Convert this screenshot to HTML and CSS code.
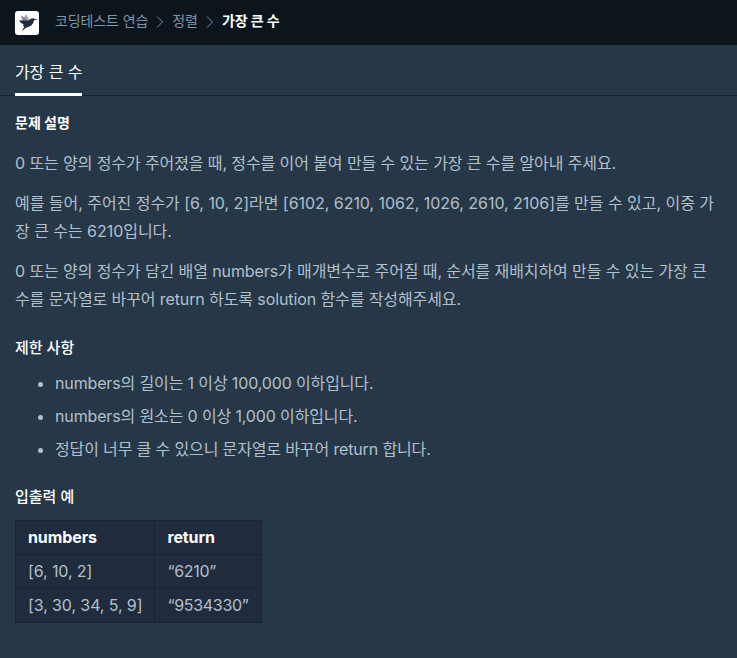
FILE: index.html
```html
<!DOCTYPE html>
<html lang="ko">
<head>
    <meta charset="UTF-8">
    <meta name="viewport" content="width=device-width, initial-scale=1.0">
    <title>코딩테스트 연습 - 가장 큰 수</title>
    <link rel="stylesheet" href="styles.css">
</head>
<body>

    <header class="navbar">
        <a class="logo" href="#">
            <svg width="24" height="24" viewBox="0 0 24 24">
                <rect width="24" height="24" rx="3" fill="#fff"/>
                <path d="M6 4.500l3 2L11 3l3.500 6-2 3-5-2z" fill="#a5acb5"/>
                <path d="M6 4.500l4.500 3 3 2.500-5 .5z" fill="#7c8592"/>
                <path d="M4 9.300l9 .5 3-2q1.500-1.200 3 0l4 .4-4 1q-.6 4-4 6l-4.500 1.700L7 20.500l2.200-5-1.700-1.500 1.500-.5Q5.500 12.500 4 9.300z" fill="#202b3d"/>
            </svg>
        </a>
        <ol class="breadcrumb">
            <li><a href="#">코딩테스트 연습</a></li>
            <li><svg class="arrow" width="8" height="14" viewBox="0 0 8 14"><path d="M1 1.500l5.500 5.500L1 12.500"/></svg></li>
            <li><a href="#">정렬</a></li>
            <li><svg class="arrow" width="8" height="14" viewBox="0 0 8 14"><path d="M1 1.500l5.500 5.500L1 12.500"/></svg></li>
            <li class="active">가장 큰 수</li>
        </ol>
    </header>

    <nav class="tabs">
        <a class="tab" href="#">가장 큰 수</a>
    </nav>

    <main class="guide">
        <h6 class="guide-title">문제 설명</h6>
        <p>0 또는 양의 정수가 주어졌을 때, 정수를 이어 붙여 만들 수 있는 가장 큰 수를 알아내 주세요.</p>
        <p class="example">예를 들어, 주어진 정수가 [6, 10, 2]라면 [6102, 6210, 1062, 1026, 2610, 2106]를 만들 수 있고, 이중 가장 큰 수는 6210입니다.</p>
        <p>0 또는 양의 정수가 담긴 배열 numbers가 매개변수로 주어질 때, 순서를 재배치하여 만들 수 있는 가장 큰 수를 문자열로 바꾸어 return 하도록 solution 함수를 작성해주세요.</p>

        <h5>제한 사항</h5>
        <ul>
            <li>numbers의 길이는 1 이상 100,000 이하입니다.</li>
            <li>numbers의 원소는 0 이상 1,000 이하입니다.</li>
            <li>정답이 너무 클 수 있으니 문자열로 바꾸어 return 합니다.</li>
        </ul>

        <h5>입출력 예</h5>
        <table>
            <thead>
                <tr><th>numbers</th><th>return</th></tr>
            </thead>
            <tbody>
                <tr><td>[6, 10, 2]</td><td>“6210”</td></tr>
                <tr><td>[3, 30, 34, 5, 9]</td><td>“9534330”</td></tr>
            </tbody>
        </table>
    </main>

</body>
</html>
```
FILE: styles.css
```css
* {
    box-sizing: border-box;
}

body {
    margin: 0;
    background-color: #263747;
    color: #b2c0cc;
    font-family: Inter, 'Noto Sans CJK KR', sans-serif;
    font-size: 16px;
    line-height: 28px;
    letter-spacing: -0.1px;
}

a {
    color: inherit;
    text-decoration: none;
}

.navbar {
    display: flex;
    align-items: center;
    height: 45px;
    padding: 0 15px;
    background-color: #0c151c;
}

.logo {
    display: flex;
    margin-right: 16px;
}

.breadcrumb {
    display: flex;
    align-items: center;
    gap: 8px;
    margin: 0;
    padding: 0 0 3px;
    list-style: none;
    font-size: 14px;
    line-height: 24px;
    color: #7e96a8;
}

.breadcrumb li {
    display: flex;
}

.breadcrumb .active {
    color: #fff;
    font-weight: 700;
}

.arrow {
    margin-top: 2px;
    fill: none;
    stroke: #78909c;
    stroke-width: 1;
}

.tabs {
    display: flex;
    height: 51px;
    padding: 0 15px;
    border-bottom: 1px solid #172334;
}

.tab {
    height: 51px;
    padding-top: 13px;
    border-bottom: 3px solid #fff;
    color: #fff;
}

.guide {
    padding: 15px 15px 0;
}

.guide-title {
    margin: 0 0 14px;
    color: #fff;
    font-size: 14px;
    font-weight: 700;
    line-height: 24px;
    letter-spacing: 0;
}

.guide p {
    margin: 0 0 12px;
    word-break: break-all;
}

.guide .example {
    letter-spacing: -0.04px;
}

.guide h5 {
    margin: 24px 0 11px;
    color: #fff;
    font-size: 15px;
    font-weight: 500;
    line-height: 21px;
    letter-spacing: 0;
}

.guide ul {
    margin: 0 0 23px;
    padding-left: 40px;
    letter-spacing: -0.14px;
}

.guide ul + h5 {
    margin: 0 0 13px;
}

.guide li + li {
    margin-top: 5px;
}

table {
    border-collapse: collapse;
    background-color: #202b3d;
    line-height: 24px;
}

th,
td {
    padding: 4px 12px 5px;
    border: 1px solid #172334;
    text-align: left;
}

td + td {
    letter-spacing: -0.3px;
}

th {
    color: #fff;
    font-weight: 700;
}
```
